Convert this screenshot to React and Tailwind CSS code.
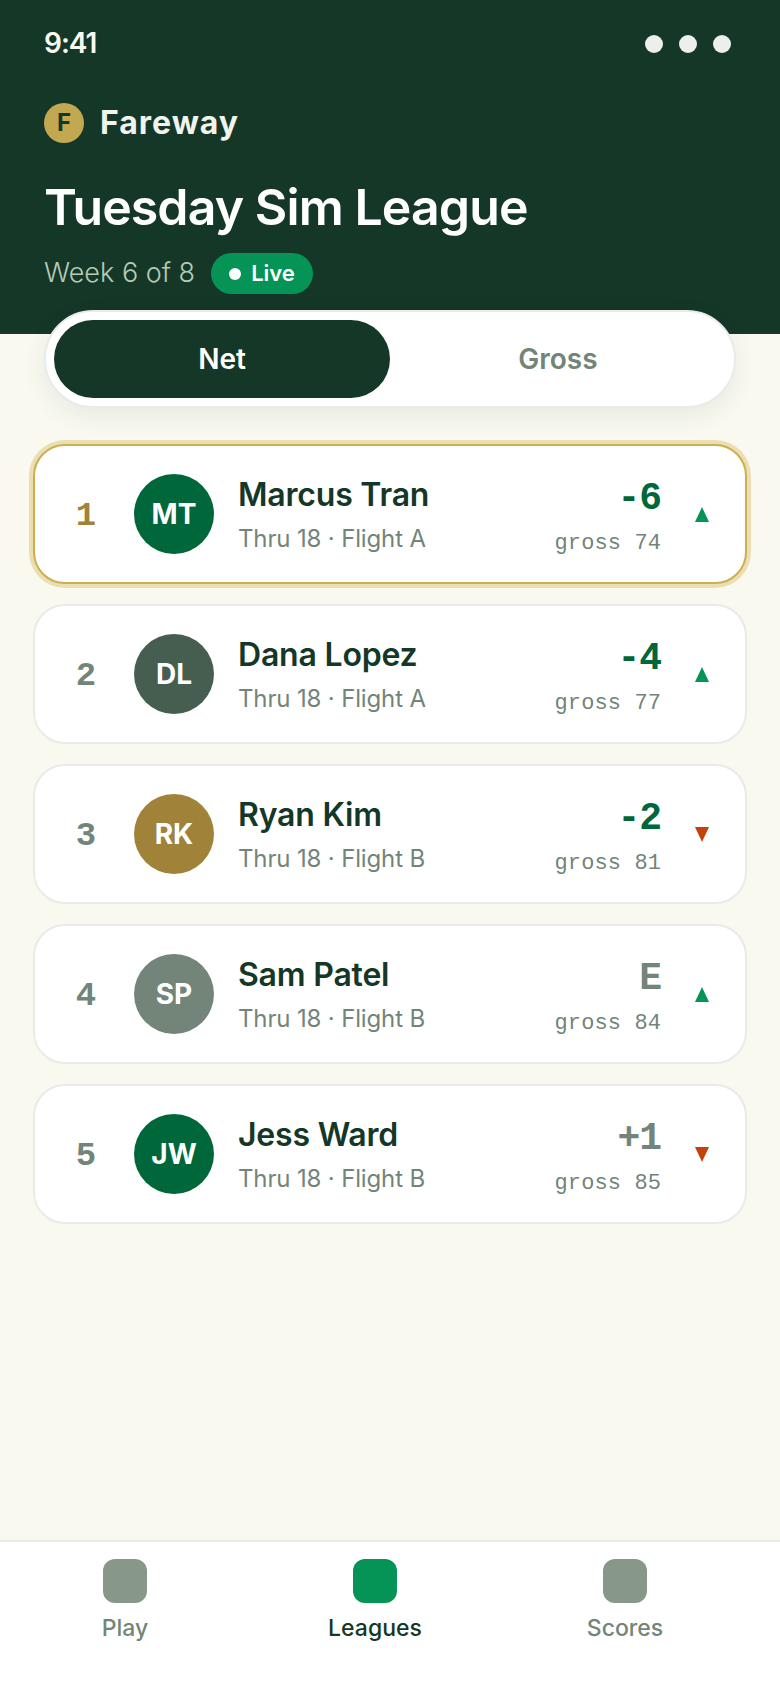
import React from 'react';

const players = [
  { rank: 1, initials: 'MT', name: 'Marcus Tran', flight: 'Flight A', score: '-6', gross: 74, up: true, avatar: 'bg-[#00673a]', scoreColor: 'text-[#00673a]' },
  { rank: 2, initials: 'DL', name: 'Dana Lopez', flight: 'Flight A', score: '-4', gross: 77, up: true, avatar: 'bg-[#455e4f]', scoreColor: 'text-[#00673a]' },
  { rank: 3, initials: 'RK', name: 'Ryan Kim', flight: 'Flight B', score: '-2', gross: 81, up: false, avatar: 'bg-[#a08338]', scoreColor: 'text-[#00673a]' },
  { rank: 4, initials: 'SP', name: 'Sam Patel', flight: 'Flight B', score: 'E', gross: 84, up: true, avatar: 'bg-[#728578]', scoreColor: 'text-[#728578]' },
  { rank: 5, initials: 'JW', name: 'Jess Ward', flight: 'Flight B', score: '+1', gross: 85, up: false, avatar: 'bg-[#00673a]', scoreColor: 'text-[#728578]' },
];

const Row = ({ p }) => {
  const lead = p.rank === 1;
  return (
    <div
      className={`flex items-center h-[140px] pl-7 pr-9 bg-white rounded-[32px] border-2 ${
        lead ? 'border-[#cfae4f] shadow-[0_0_0_4px_#e9dfb3]' : 'border-[#e8ebe7]'
      }`}
    >
      <div
        className={`w-[46px] pt-1 text-center text-[34px] font-bold font-['Liberation_Mono',monospace] ${
          lead ? 'text-[#a08338]' : 'text-[#728578]'
        }`}
      >
        {p.rank}
      </div>
      <div className={`ml-[25px] w-20 h-20 rounded-full flex items-center justify-center text-white text-[28px] font-bold ${p.avatar}`}>
        {p.initials}
      </div>
      <div className="ml-6 flex-1 pt-1">
        <div className="text-[32px] leading-[42px] font-semibold tracking-[-0.2px] text-[#143728]">{p.name}</div>
        <div className="mt-1 text-[24px] leading-[38px] tracking-[-0.15px] text-[#728578]">Thru 18 · {p.flight}</div>
      </div>
      <div className="text-right pt-[10px] font-['Liberation_Mono',monospace]">
        <div className={`text-[38px] leading-[46px] font-bold tracking-[-1px] ${p.scoreColor}`}>{p.score}</div>
        <div className="mt-1 text-[22px] leading-[36px] tracking-[0.1px] text-[#728578]">gross {p.gross}</div>
      </div>
      <svg className="ml-[34px]" width="14" height="15" viewBox="0 0 14 15">
        {p.up ? <polygon points="7,0 14,15 0,15" fill="#059356" /> : <polygon points="0,0 14,0 7,15" fill="#c2410c" />}
      </svg>
    </div>
  );
};

const NavItem = ({ label, active }) => (
  <div className="w-[250px] flex flex-col items-center">
    <div className={`w-11 h-11 rounded-[12px] ${active ? 'bg-[#059356]' : 'bg-[#87988b]'}`} />
    <div className={`mt-[7px] text-[23px] leading-[36px] font-medium ${active ? 'text-[#143728]' : 'text-[#728578]'}`}>{label}</div>
  </div>
);

const App = () => {
  return (
    <div className="w-[780px] h-[1688px] flex flex-col bg-[#f9f9f0] font-['Inter',sans-serif]">
      <div className="h-[334px] shrink-0 bg-[#143728] px-[44px]">
        <div className="pt-[24px] flex items-center justify-between">
          <span className="text-[28px] leading-[38px] font-semibold tracking-[-1px] text-[#f9f9f0]">9:41</span>
          <div className="flex gap-4 mr-[5px] mt-[2px]">
            <span className="w-[18px] h-[18px] rounded-full bg-[#ecefec]" />
            <span className="w-[18px] h-[18px] rounded-full bg-[#ecefec]" />
            <span className="w-[18px] h-[18px] rounded-full bg-[#ecefec]" />
          </div>
        </div>
        <div className="mt-[41px] flex items-center gap-4">
          <div className="w-10 h-10 rounded-full bg-[#c2a951] flex items-center justify-center text-[24px] font-bold text-[#143728]">F</div>
          <span className="text-[32px] leading-10 font-bold tracking-[1px] text-[#f1f3ee]">Fareway</span>
        </div>
        <h1 className="mt-[31px] text-[50px] leading-[66px] font-semibold tracking-[-0.9px] text-white">Tuesday Sim League</h1>
        <div className="mt-[13px] flex items-center gap-4">
          <span className="text-[27px] font-light text-[#b5cbb5]">Week 6 of 8</span>
          <span className="flex items-center gap-[10px] h-[41px] px-[18px] rounded-full bg-[#059356] text-white text-[22px] font-semibold">
            <span className="w-3 h-3 rounded-full bg-white" />
            Live
          </span>
        </div>
      </div>

      <div className="relative -mt-6 mx-[44px] h-[98px] p-2 flex rounded-full bg-white border-2 border-[#e8ebe7] shadow-[0_8px_24px_rgba(22,53,40,0.08)]">
        <div className="w-[336px] rounded-full bg-[#143728] flex items-center justify-center text-[28px] font-semibold text-white">Net</div>
        <div className="flex-1 flex items-center justify-center text-[28px] font-semibold text-[#728578]">Gross</div>
      </div>

      <div className="mt-9 mx-[33px] flex flex-col gap-5 flex-1">
        {players.map((p) => (
          <Row key={p.rank} p={p} />
        ))}
      </div>

      <div className="h-[148px] shrink-0 bg-white border-t-2 border-[#e8ebe7] pt-[17px] flex">
        <NavItem label="Play" />
        <NavItem label="Leagues" active />
        <NavItem label="Scores" />
      </div>
    </div>
  );
};

export default App;
